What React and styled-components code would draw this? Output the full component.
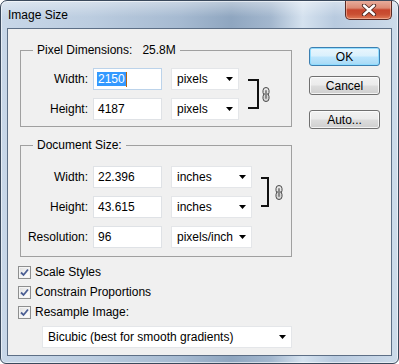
import React from 'react';
import styled, { createGlobalStyle } from 'styled-components';

const Global = createGlobalStyle`
  html, body { margin: 0; padding: 0; background: #ffffff; }
  body {
    font-family: "Liberation Sans", Arial, sans-serif;
    font-size: 12px;
    color: #000;
  }
  * { box-sizing: border-box; }
`;

const Window = styled.div`
  width: 399px;
  height: 364px;
  border: 1px solid #3a495c;
  border-radius: 7px 7px 6px 6px;
  padding: 0 6px 7px;
  display: flex;
  flex-direction: column;
  overflow: hidden;
  box-shadow: inset 0 0 0 1px rgba(255, 255, 255, 0.55);
  background:
    linear-gradient(180deg, rgba(255, 255, 255, 0.4) 0px, rgba(255, 255, 255, 0) 16px),
    linear-gradient(90deg, #c8d7e8 0%, #bccde0 22%, #a6bad1 45%, #8fa6c0 58%, #a3b7ce 68%, #d5e2ef 76%, #b8cadf 84%, #cddbea 100%);
`;

const TitleBar = styled.div`
  height: 27px;
  display: flex;
  align-items: flex-start;
  padding-left: 1px;
`;

const Title = styled.div`
  padding-top: 7px;
  line-height: 15px;
  font-size: 12px;
  color: #000;
`;

const CloseButton = styled.div`
  margin-left: auto;
  margin-top: -1px;
  width: 47px;
  height: 20px;
  border: 1px solid #5a2a24;
  border-top: none;
  border-radius: 0 0 5px 5px;
  display: flex;
  align-items: center;
  justify-content: center;
  box-shadow: inset 0 0 0 1px rgba(255, 210, 190, 0.5);
  background: linear-gradient(180deg, #e9b0a0 0%, #dc8a74 42%, #c7452d 52%, #c94f33 75%, #e07a57 100%);
`;

const Client = styled.div`
  flex: 1;
  border: 1px solid #5d6f86;
  background: #f0f0f0;
  display: flex;
  padding: 0 11px 0 12px;
`;

const LeftColumn = styled.div`
  width: 272px;
  padding-top: 21px;
  display: flex;
  flex-direction: column;
`;

const RightColumn = styled.div`
  margin-left: auto;
  width: 71px;
  padding-top: 18px;
  display: flex;
  flex-direction: column;
`;

const Group = styled.div`
  position: relative;
  border: 1px solid #a0a0a0;
  margin-top: ${(p) => p.$mt || 0}px;
  padding: ${(p) => p.$pt}px 0 ${(p) => p.$pb}px 0;
  display: grid;
  grid-template-columns: ${(p) => p.$cols};
  grid-template-rows: repeat(${(p) => p.$rows}, 22px);
  row-gap: 8px;
`;

const Legend = styled.div`
  position: absolute;
  top: -8px;
  left: 12px;
  padding: 0 4px;
  line-height: 14px;
  background: #f0f0f0;
  display: flex;
`;

const LegendValue = styled.span`
  margin-left: 10px;
`;

const Label = styled.div`
  grid-column: 1;
  align-self: center;
  text-align: right;
  line-height: 14px;
`;

const Field = styled.div`
  grid-column: 2;
  margin-left: 5px;
  height: 22px;
  background: #fff;
  border: 1px solid ${(p) => (p.$focused ? '#bcd3ea' : '#dfe2e6')};
  display: flex;
  align-items: center;
  padding-left: 4px;
  line-height: 14px;
`;

const Selected = styled.span`
  background: #3399ff;
  color: #fff;
  padding: 0 1px;
  margin-left: -1px;
`;

const Caret = styled.span`
  width: 1px;
  height: 15px;
  background: #b8640f;
`;

const Select = styled.div`
  grid-column: 3;
  margin-left: ${(p) => p.$ml ?? 9}px;
  width: ${(p) => (p.$w ? `${p.$w}px` : 'auto')};
  height: 22px;
  background: #fff;
  border: 1px solid #e4e6e9;
  display: flex;
  align-items: center;
  padding: 0 5px 0 5px;
  line-height: 14px;
`;

const SelectText = styled.span`
  flex: 1;
`;

const Bracket = styled.div`
  grid-column: 4;
  grid-row: 1 / span 2;
  margin: 11px 0 11px 9px;
  border: 2px solid #111;
  border-left: none;
`;

const ChainWrap = styled.div`
  grid-column: 5;
  grid-row: 1 / span 2;
  align-self: center;
  margin-left: ${(p) => p.$ml}px;
  display: flex;
`;

const CheckRow = styled.div`
  height: 20px;
  display: flex;
  align-items: center;
  gap: 4px;
  margin-left: -2px;
  margin-top: ${(p) => p.$mt || 0}px;
`;

const CheckBox = styled.div`
  width: 13px;
  height: 13px;
  border: 1px solid #8e8f8f;
  background: linear-gradient(135deg, #dcdcdc 0%, #f6f6f6 60%, #ffffff 100%);
  box-shadow: inset 0 0 0 1px #f4f4f4;
  display: flex;
  align-items: center;
  justify-content: center;
`;

const Button = styled.div`
  height: 19px;
  margin-top: ${(p) => p.$mt || 0}px;
  border: 1px solid ${(p) => (p.$default ? '#3c7fb1' : '#707070')};
  border-radius: 3px;
  display: flex;
  align-items: center;
  justify-content: center;
  line-height: 14px;
  box-shadow: inset 0 0 0 1px ${(p) => (p.$default ? 'rgba(140, 220, 255, 0.9)' : 'rgba(255, 255, 255, 0.75)')};
  background: ${(p) =>
    p.$default
      ? 'linear-gradient(180deg, #eaf6fd 0%, #d9f0fc 48%, #bee6fd 52%, #a7d9f5 100%)'
      : 'linear-gradient(180deg, #f2f2f2 0%, #ebebeb 48%, #dddddd 52%, #cfcfcf 100%)'};
`;

const ResampleSelect = styled(Select)`
  margin-top: 4px;
`;

const Arrow = () => (
  <svg width="7" height="4" viewBox="0 0 7 4">
    <path d="M0 0 H7 L3.5 4 Z" fill="#000" />
  </svg>
);

const Chain = () => (
  <svg width="8" height="15" viewBox="0 0 8 15">
    <rect x="1" y="0.5" width="6" height="8" rx="3" fill="#e6e6e6" stroke="#4a4a4a" />
    <rect x="1" y="6.5" width="6" height="8" rx="3" fill="#d6d6d6" stroke="#4a4a4a" />
    <rect x="3" y="3" width="2" height="9" rx="1" fill="#8a8a8a" />
  </svg>
);

const Check = () => (
  <svg width="9" height="9" viewBox="0 0 9 9">
    <path d="M1 4.5 L3.5 7 L8 1.5" fill="none" stroke="#4b5e93" strokeWidth="1.8" />
  </svg>
);

const CloseIcon = () => (
  <svg width="16" height="12" viewBox="0 0 16 12">
    <path d="M3 1.5 L13 10.5 M13 1.5 L3 10.5" stroke="#4b2620" strokeWidth="4.2" strokeLinecap="round" />
    <path d="M3 1.5 L13 10.5 M13 1.5 L3 10.5" stroke="#ffffff" strokeWidth="2.4" strokeLinecap="round" />
  </svg>
);

export default function App() {
  return (
    <>
      <Global />
      <Window>
        <TitleBar>
          <Title>Image Size</Title>
          <CloseButton>
            <CloseIcon />
          </CloseButton>
        </TitleBar>
        <Client>
          <LeftColumn>
            <Group $pt={17} $pb={6} $rows={2} $cols="67px 74px 77px 20px 11px">
              <Legend>
                Pixel Dimensions:<LegendValue>25.8M</LegendValue>
              </Legend>
              <Label>Width:</Label>
              <Field $focused>
                <Selected>2150</Selected>
                <Caret />
              </Field>
              <Select>
                <SelectText>pixels</SelectText>
                <Arrow />
              </Select>
              <Bracket />
              <ChainWrap $ml={3}>
                <Chain />
              </ChainWrap>
              <Label>Height:</Label>
              <Field>4187</Field>
              <Select>
                <SelectText>pixels</SelectText>
                <Arrow />
              </Select>
            </Group>

            <Group $mt={18} $pt={20} $pb={8} $rows={3} $cols="67px 74px 90px 17px 14px">
              <Legend>Document Size:</Legend>
              <Label>Width:</Label>
              <Field>22.396</Field>
              <Select>
                <SelectText>inches</SelectText>
                <Arrow />
              </Select>
              <Bracket />
              <ChainWrap $ml={6}>
                <Chain />
              </ChainWrap>
              <Label>Height:</Label>
              <Field>43.615</Field>
              <Select>
                <SelectText>inches</SelectText>
                <Arrow />
              </Select>
              <Label>Resolution:</Label>
              <Field>96</Field>
              <Select>
                <SelectText>pixels/inch</SelectText>
                <Arrow />
              </Select>
            </Group>

            <CheckRow $mt={5}>
              <CheckBox>
                <Check />
              </CheckBox>
              Scale Styles
            </CheckRow>
            <CheckRow>
              <CheckBox>
                <Check />
              </CheckBox>
              Constrain Proportions
            </CheckRow>
            <CheckRow>
              <CheckBox>
                <Check />
              </CheckBox>
              Resample Image:
            </CheckRow>
            <ResampleSelect $ml={22} $w={250}>
              <SelectText>Bicubic (best for smooth gradients)</SelectText>
              <Arrow />
            </ResampleSelect>
          </LeftColumn>
          <RightColumn>
            <Button $default>OK</Button>
            <Button $mt={10}>Cancel</Button>
            <Button $mt={15}>Auto...</Button>
          </RightColumn>
        </Client>
      </Window>
    </>
  );
}
